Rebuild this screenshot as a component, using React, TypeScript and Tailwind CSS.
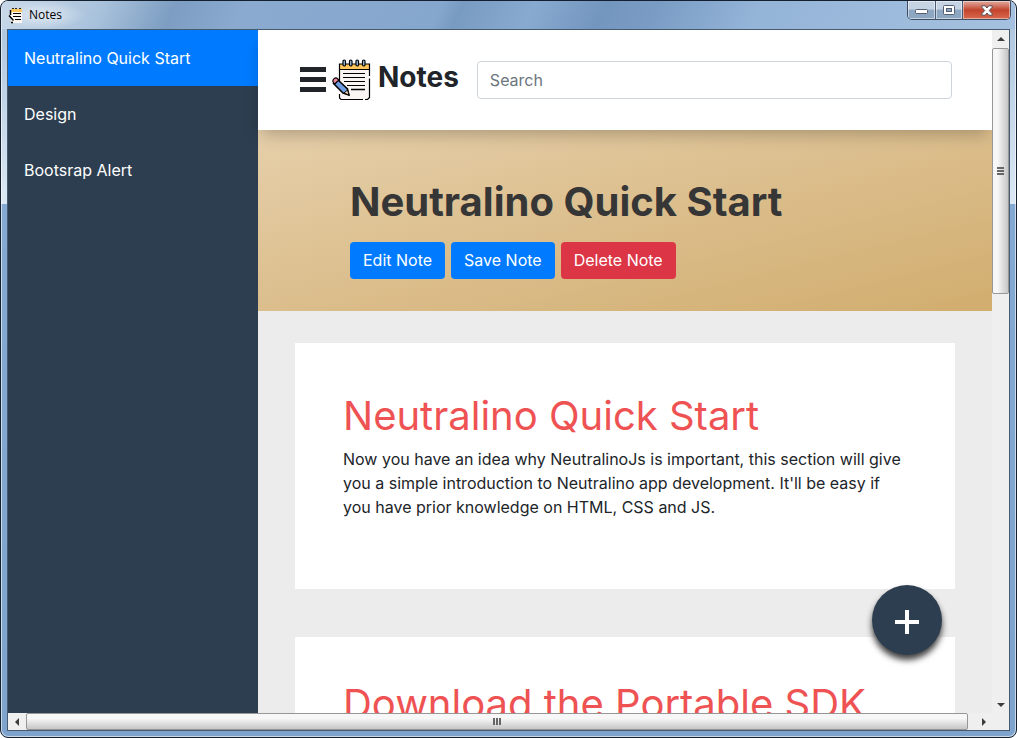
import React from "react";

const notes = ["Neutralino Quick Start", "Design", "Bootsrap Alert"];

function NotepadIcon({ className }: { className: string }) {
  return (
    <svg className={className} viewBox="0 0 40 42" aria-hidden="true">
      <path d="M7.5 5h30v35h-30Z" fill="#faf5f3" />
      <path d="M7.5 5h30v5.500h-30Z" fill="#ffc65c" />
      <path
        d="M7.500 22V5h30v12M37.500 19.500V38.500L35.500 40.500H33M31 40.500H9L7.500 39V35M7 10.500h31"
        fill="none"
        stroke="#000"
        strokeWidth="1.200"
      />
      <g fill="#9cc3e6" stroke="#000" strokeWidth="1.200">
        <rect x="11" y="1" width="2.500" height="6" rx="1.200" />
        <rect x="17.500" y="1" width="2.500" height="6" rx="1.200" />
        <rect x="24" y="1" width="2.500" height="6" rx="1.200" />
        <rect x="30.500" y="1" width="2.500" height="6" rx="1.200" />
      </g>
      <path d="M11 14.500h22M11 18.500h22M12 22.500h21M15 26.500h18" stroke="#000" strokeWidth="1.200" />
      <path d="M19 30.500h14" stroke="#000" strokeWidth="1.600" />
      <path d="M5.500 20.500 15.500 30l1.500 6-6-2L1.500 24.500Z" fill="#6f9be0" stroke="#000" strokeWidth="1.500" />
      <path d="M.800 22.500c0-2.500 2-4 4-3.500l2 2-4 4Z" fill="#f2869c" stroke="#000" strokeWidth="1.200" />
      <path d="m15.500 31-3.500 3 5 2Z" fill="#f7d9b5" stroke="#000" />
    </svg>
  );
}

function SmallNotepadIcon() {
  return (
    <svg className="h-[17px] w-4" viewBox="0 0 16 17" aria-hidden="true">
      <path d="M3 2h11v14H3Z" fill="#fbf6f2" />
      <path d="M3 2h11v3H3Z" fill="#fbc65e" />
      <path d="M4 1h2v1H4zM7 1h2v1H7zM11 1h2v1h-2z" fill="#222" />
      <path d="M5 6.500h8M5 9.500h8M7 12.500h6" stroke="#000" />
      <path d="M2.500 3v5M1 8.500l4.500 5M3 15.500h2" stroke="#000" strokeWidth="1.500" />
    </svg>
  );
}

function Arrow({ d }: { d: string }) {
  return (
    <svg className="h-2 w-2" viewBox="0 0 8 8" aria-hidden="true">
      <path d={d} fill="#3c3c3c" />
    </svg>
  );
}

function TitleBar() {
  return (
    <header className="mx-px flex h-7 shrink-0 items-start justify-between bg-[linear-gradient(115deg,#c8d8e8_0%,#a9c2dc_10%,#7d9ec2_17%,#8aaad0_24%,#86a7cd_43%,#789bc2_45%,#89aad0_52%,#7396bf_59%,#7a9cc4_64%,#94b4d8_74%,#a5c1df_100%)]">
      <div className="flex h-7 items-center gap-[5px] bg-[radial-gradient(closest-side,rgba(255,255,255,0.55),transparent)] pr-6 pl-1.5">
        <SmallNotepadIcon />
        <h1 className="text-xs text-black">Notes</h1>
      </div>
      <div className="mr-1 flex h-[19px] overflow-hidden rounded-b-[5px] border border-t-0 border-[#3f4d63]">
        <button aria-label="Minimize" className="flex w-7 items-center justify-center border-r border-[#4b5b73] bg-linear-to-b from-[#c5d3e3] from-45% to-[#8da6c1] to-50% shadow-[inset_0_0_0_1px_rgba(255,255,255,0.5)]">
          <svg className="mt-1 h-[6px] w-[13px]" viewBox="0 0 13 6" aria-hidden="true">
            <rect x="0.500" y="0.500" width="12" height="4" rx="1" fill="#fff" stroke="#555e70" />
          </svg>
        </button>
        <button aria-label="Maximize" className="flex w-[27px] items-center justify-center border-r border-[#4b5b73] bg-linear-to-b from-[#c5d3e3] from-45% to-[#8da6c1] to-50% shadow-[inset_0_0_0_1px_rgba(255,255,255,0.5)]">
          <svg className="h-[10px] w-3" viewBox="0 0 12 10" aria-hidden="true">
            <rect x="0.500" y="0.500" width="11" height="9" rx="1" fill="#fff" stroke="#555e70" />
            <rect x="3.500" y="3.500" width="5" height="3" fill="#8ea5bf" stroke="#555e70" />
          </svg>
        </button>
        <button aria-label="Close" className="flex w-[47px] items-center justify-center bg-linear-to-b from-[#dda196] from-5% via-[#c2432c] via-50% to-[#d9694d] shadow-[inset_0_0_0_1px_rgba(255,255,255,0.45)]">
          <svg className="h-[11px] w-3" viewBox="0 0 12 11" aria-hidden="true">
            <path d="M.8.800h3.500L6 3 7.700.800h3.500v1.400L8.300 5.500l2.900 3.300v1.400H7.700L6 8l-1.700 2.200H.8V8.800l2.900-3.300L.8 2.200Z" fill="#fff" stroke="#5a4a55" />
          </svg>
        </button>
      </div>
    </header>
  );
}

function Sidebar() {
  return (
    <nav aria-label="Notes" className="w-[250px] shrink-0 bg-[#2d3e50]">
      {notes.map((note, i) => (
        <a
          key={note}
          href="#"
          className={i === 0 ? "block bg-[#007bff] p-4 text-white" : "block p-4 text-white"}
        >
          {note}
        </a>
      ))}
    </nav>
  );
}

function TopBar() {
  return (
    <div className="relative z-10 flex h-[100px] items-center bg-white pr-10 pl-[42px] shadow-[0_8px_16px_-4px_rgba(0,0,0,0.25)]">
      <button aria-label="Toggle menu" className="mr-1.5 shrink-0">
        <svg className="block h-[26px] w-[26px]" viewBox="0 0 26 26" aria-hidden="true">
          <path d="M0 0h26v5H0zM0 10h26v5H0zM0 20h26v5H0z" fill="#212529" />
        </svg>
      </button>
      <NotepadIcon className="h-[42px] w-10 shrink-0" />
      <h2 className="mr-[18px] ml-1.5 pb-1.5 text-[28px] leading-8 font-bold">Notes</h2>
      <input
        type="search"
        aria-label="Search"
        placeholder="Search"
        className="h-[38px] min-w-0 flex-1 rounded border border-[#ced4da] bg-white px-3 placeholder:text-[#6c757d]"
      />
    </div>
  );
}

function Hero() {
  return (
    <section className="bg-linear-to-br from-[#e6cfaa] to-[#d1ad6e] px-[92px] pt-12 pb-8">
      <h2 className="mb-4 text-[40px] leading-12 font-bold text-[#363636]">Neutralino Quick Start</h2>
      <div className="flex gap-1.5 text-white">
        <button className="h-[37px] rounded bg-[#007bff] px-[13px] pb-0.5">Edit Note</button>
        <button className="h-[37px] rounded bg-[#007bff] px-[13px] pb-0.5">Save Note</button>
        <button className="h-[37px] rounded bg-[#dc3545] px-[13px] pb-0.5">Delete Note</button>
      </div>
    </section>
  );
}

function Card({ title, compact = false, children }: { title: string; compact?: boolean; children?: React.ReactNode }) {
  return (
    <article className={compact ? "bg-white px-12 pt-[42px] pb-[70px]" : "bg-white px-12 pt-12 pb-[70px]"}>
      <h3 className="mb-1.5 text-[40px] leading-[50px] font-normal text-[#ee5253]">{title}</h3>
      <p>{children}</p>
    </article>
  );
}

function VerticalScrollbar() {
  return (
    <div className="flex w-[17px] shrink-0 flex-col bg-[#efefef]">
      <button aria-label="Scroll up" className="flex h-[18px] items-center justify-center">
        <Arrow d="M4 2 8 6H0Z" />
      </button>
      <div className="flex-1">
        <div className="flex h-[38%] flex-col items-center justify-center gap-px rounded-xs border border-[#979797] bg-linear-to-r from-[#f7f7f7] from-30% to-[#c6c6c8]">
          <span className="h-0.5 w-[7px] bg-[#666]" />
          <span className="h-0.5 w-[7px] bg-[#666]" />
          <span className="h-0.5 w-[7px] bg-[#666]" />
        </div>
      </div>
      <button aria-label="Scroll down" className="flex h-[17px] items-center justify-center">
        <Arrow d="M0 2h8L4 6Z" />
      </button>
    </div>
  );
}

function HorizontalScrollbar() {
  return (
    <div className="flex h-[17px] shrink-0 bg-[#efefef] pr-[17px]">
      <button aria-label="Scroll left" className="flex w-[18px] items-center justify-center">
        <Arrow d="M6 0v8L2 4Z" />
      </button>
      <div className="flex flex-1 items-center justify-center gap-px rounded-xs border border-[#979797] bg-linear-to-b from-[#f7f7f7] from-30% to-[#c6c6c8]">
        <span className="h-[7px] w-0.5 bg-[#666]" />
        <span className="h-[7px] w-0.5 bg-[#666]" />
        <span className="h-[7px] w-0.5 bg-[#666]" />
      </div>
      <button aria-label="Scroll right" className="flex w-6 items-center justify-end pr-1">
        <Arrow d="M2 0v8l4-4Z" />
      </button>
    </div>
  );
}

export default function App() {
  return (
    <div className="h-screen bg-white font-['Open_Sans',sans-serif]">
      <div className="flex h-full flex-col overflow-hidden rounded-lg border border-[#15202e] bg-[linear-gradient(to_bottom,#a9c2dc_0,#dce8f4_203px,#84a9d2_203px,#7ea4cd_100%)] shadow-[inset_0_0_0_1px_rgba(255,255,255,0.6)]">
        <TitleBar />
        <div className="mx-[6px] mb-[6px] flex min-h-0 flex-1 flex-col border border-[#465a70] bg-white font-['Inter',sans-serif] text-base text-[#212529]">
          <div className="flex min-h-0 flex-1">
            <div className="relative flex min-w-0 flex-1 overflow-hidden">
              <Sidebar />
              <main className="min-w-0 flex-1 bg-[#ececec]">
                <TopBar />
                <Hero />
                <div className="flex flex-col gap-12 px-[37px] py-8">
                  <Card title="Neutralino Quick Start">
                    Now you have an idea why NeutralinoJs is important, this section will give you a simple
                    introduction to Neutralino app development. It'll be easy if you have prior knowledge on HTML, CSS
                    and JS.
                  </Card>
                  <Card title="Download the Portable SDK" compact />
                </div>
              </main>
              <button
                aria-label="Add note"
                className="absolute right-[50px] bottom-[58px] z-20 flex size-[70px] items-center justify-center rounded-full bg-[#2d3e50] pt-1 shadow-[0_5px_6px_rgba(0,0,0,0.75)]"
              >
                <svg className="size-6" viewBox="0 0 24 24" aria-hidden="true">
                  <path d="M10 0h4v10h10v4H14v10h-4V14H0v-4h10Z" fill="#fff" />
                </svg>
              </button>
            </div>
            <VerticalScrollbar />
          </div>
          <HorizontalScrollbar />
        </div>
      </div>
    </div>
  );
}
